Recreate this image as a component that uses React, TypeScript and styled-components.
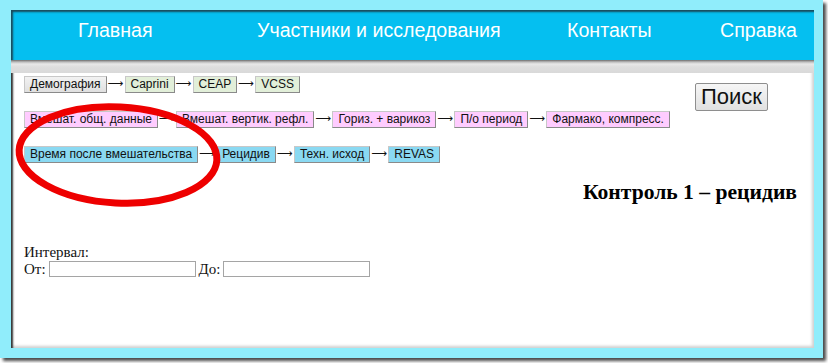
import React from "react";
import styled, { createGlobalStyle } from "styled-components";

const Global = createGlobalStyle`
  html, body { margin: 0; padding: 0; background: #ffffff; }
  body { width: 828px; height: 363px; overflow: hidden; }
`;

const Frame = styled.div`
  width: 823px;
  height: 358px;
  background: #90edfb;
  box-shadow: 3px 3px 3px #4a4a4a;
  padding: 10px 0 0 11px;
  box-sizing: border-box;
`;

const Panel = styled.div`
  position: relative;
  width: 803px;
  height: 338px;
  background: #ffffff;
  box-shadow: inset 2px 2px 2px #333, inset -2px -2px 3px #d0d0d0;
  display: flex;
  flex-direction: column;
`;

const Header = styled.nav`
  height: 50px;
  background: #05bff0;
  box-shadow: inset 2px 2px 2px #1a4a5a;
  display: flex;
  align-items: center;
  font-family: "Liberation Sans", Arial, sans-serif;
  font-size: 19.6px;
  color: #ffffff;
  padding-left: 67px;
  padding-bottom: 10px;
  box-sizing: border-box;
`;

const NavItem = styled.span<{ $w: number }>`
  width: ${(p) => p.$w}px;
  flex: none;
  white-space: nowrap;
`;

const GrayBar = styled.div`
  height: 13px;
  background: linear-gradient(#6e6e6e 0, #bdbdbd 2px, #e8e8e8 4px, #dedede 7px, #d9d9d9 13px);
`;

const Body = styled.div`
  display: flex;
  padding: 3px 0 0 13px;
`;

const Flow = styled.div`
  flex: 1;
  display: flex;
  flex-direction: column;
  gap: 18px;
`;

const Row = styled.div`
  display: flex;
  align-items: center;
  height: 17px;
`;

const Step = styled.button<{ $bg: string }>`
  font-family: "Liberation Sans", Arial, sans-serif;
  font-size: 12px;
  color: #111;
  background: ${(p) => p.$bg};
  border: 1px solid #a0a0a0;
  border-color: #c8c8c8 #8a8a8a #8a8a8a #c8c8c8;
  height: 17px;
  padding: 0 5px;
  margin: 0;
  line-height: 15px;
  white-space: nowrap;
  border-radius: 0;
`;

const Arrow = styled.span`
  width: 18px;
  flex: none;
  text-align: center;
  font-family: "DejaVu Sans", sans-serif;
  font-size: 11px;
  color: #111;
  line-height: 17px;
  margin-top: -2px;
`;

const SearchBtn = styled.button`
  font-family: "Liberation Sans", Arial, sans-serif;
  font-size: 22px;
  color: #111;
  background: linear-gradient(#f6f6f6, #e0e0e0);
  border: 1px solid #8e8e8e;
  border-radius: 2px;
  height: 28px;
  padding: 0 5px;
  margin: 7px 46px 0 0;
  line-height: 24px;
  align-self: flex-start;
`;

const Title = styled.h2`
  margin: 17px 17px 0 0;
  text-align: right;
  font-family: "Liberation Serif", "Times New Roman", serif;
  font-weight: bold;
  font-size: 21.6px;
  color: #000;
  line-height: 24px;
`;

const Interval = styled.div`
  margin: 40px 0 0 13px;
  font-family: "Liberation Serif", "Times New Roman", serif;
  font-size: 15px;
  color: #111;
  line-height: 16px;
`;

const InputLine = styled.div`
  display: flex;
  align-items: center;
  gap: 3px;
  margin-top: 1px;
`;

const Field = styled.input`
  width: 147px;
  height: 16px;
  box-sizing: border-box;
  border: 1px solid #a5a5a5;
  padding: 0;
  margin: 0;
  background: #fff;
`;

const Overlay = styled.svg`
  position: absolute;
  left: 0;
  top: 0;
  pointer-events: none;
`;

const GRAY = "linear-gradient(#f2f2f2, #e0e0e0)";
const GREEN = "#e2efd9";
const PINK = "#ffccff";
const BLUE = "#8ad9f2";

type StepDef = { label: string; bg: string };

const rows: StepDef[][] = [
  [
    { label: "Демография", bg: GRAY },
    { label: "Caprini", bg: GREEN },
    { label: "CEAP", bg: GREEN },
    { label: "VCSS", bg: GREEN },
  ],
  [
    { label: "Вмешат. общ. данные", bg: PINK },
    { label: "Вмешат. вертик. рефл.", bg: PINK },
    { label: "Гориз. + варикоз", bg: PINK },
    { label: "П/о период", bg: PINK },
    { label: "Фармако, компресс.", bg: PINK },
  ],
  [
    { label: "Время после вмешательства", bg: BLUE },
    { label: "Рецидив", bg: BLUE },
    { label: "Техн. исход", bg: BLUE },
    { label: "REVAS", bg: BLUE },
  ],
];

export default function App() {
  return (
    <>
      <Global />
      <Frame>
        <Panel>
          <Header>
            <NavItem $w={179}>Главная</NavItem>
            <NavItem $w={310}>Участники и исследования</NavItem>
            <NavItem $w={153}>Контакты</NavItem>
            <NavItem $w={90}>Справка</NavItem>
          </Header>
          <GrayBar />
          <Body>
            <Flow>
              {rows.map((r, i) => (
                <Row key={i}>
                  {r.map((s, j) => (
                    <React.Fragment key={s.label}>
                      {j > 0 && <Arrow>⟶</Arrow>}
                      <Step $bg={s.bg}>{s.label}</Step>
                    </React.Fragment>
                  ))}
                </Row>
              ))}
            </Flow>
            <SearchBtn>Поиск</SearchBtn>
          </Body>
          <Title>Контроль 1 – рецидив</Title>
          <Interval>
            Интервал:
            <InputLine>
              <span>От:</span>
              <Field />
              <span>До:</span>
              <Field />
            </InputLine>
          </Interval>
          <Overlay width="803" height="338" viewBox="0 0 803 338">
            <ellipse
              cx="107"
              cy="145"
              rx="99"
              ry="48"
              fill="none"
              stroke="#ee0000"
              strokeWidth="7"
              transform="rotate(3 107 145)"
            />
          </Overlay>
        </Panel>
      </Frame>
    </>
  );
}
